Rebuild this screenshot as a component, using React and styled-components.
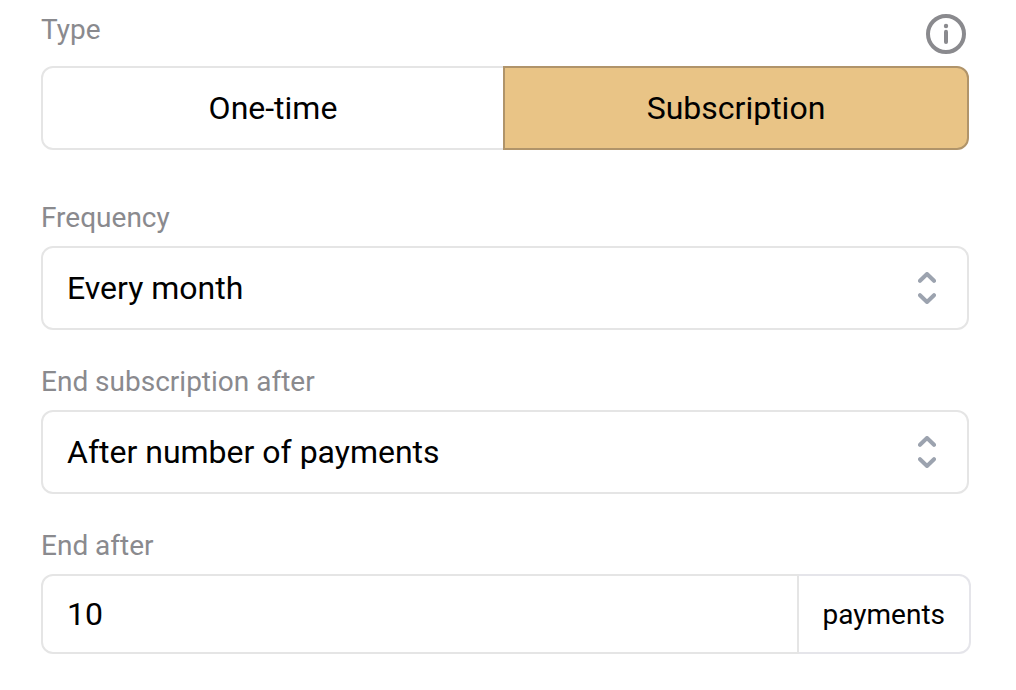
import React, { useState } from "react";
import styled, { createGlobalStyle, ThemeProvider } from "styled-components";

const theme = {
  text: "#000",
  label: "#8a8a8e",
  border: "#e5e5e5",
  addonBorder: "#e5e5ea",
  chevron: "#9ca3af",
  accent: "#e9c486",
  accentBorder: "#b0946a"
};

const SelectField = ({ id, label, options }) => (
  <Field>
    <Label htmlFor={id}>{label}</Label>
    <SelectWrapper>
      <Select id={id}>
        {options.map(option => (
          <option key={option}>{option}</option>
        ))}
      </Select>
      <Chevrons viewBox="0 0 18 32" aria-hidden="true">
        <path d="M2 8.8L9 2L16 8.8M2 23.2L9 30L16 23.2" />
      </Chevrons>
    </SelectWrapper>
  </Field>
);

const App = () => {
  const [type, setType] = useState("Subscription");
  const [count, setCount] = useState("10");

  return (
    <ThemeProvider theme={theme}>
      <GlobalStyle />
      <Form onSubmit={e => e.preventDefault()}>
        <TypeField>
          <TypeHeader>
            <Label as="span" id="type-label">
              Type
            </Label>
            <InfoButton type="button" aria-label="About payment types">
              <svg width="40" height="40" viewBox="0 0 40 40" fill="none">
                <circle cx="20" cy="20" r="18" />
                <path d="M20 17.8V28" />
                <circle cx="20" cy="12" r="2.2" className="dot" />
              </svg>
            </InfoButton>
          </TypeHeader>
          <Segments role="group" aria-labelledby="type-label">
            {["One-time", "Subscription"].map(name => (
              <Segment
                key={name}
                type="button"
                aria-pressed={type === name}
                $active={type === name}
                onClick={() => setType(name)}
              >
                {name}
              </Segment>
            ))}
          </Segments>
        </TypeField>
        <SelectField
          id="frequency"
          label="Frequency"
          options={["Every month", "Every week", "Every year"]}
        />
        <SelectField
          id="end-subscription"
          label="End subscription after"
          options={["After number of payments", "Never", "On date"]}
        />
        <Field>
          <Label htmlFor="end-after">End after</Label>
          <InputGroup>
            <Input
              id="end-after"
              inputMode="numeric"
              value={count}
              onChange={e => setCount(e.target.value)}
            />
            <Addon>payments</Addon>
          </InputGroup>
        </Field>
      </Form>
    </ThemeProvider>
  );
};

const GlobalStyle = createGlobalStyle`
  * {
    box-sizing: border-box;
  }
  body {
    margin: 0;
    background: #fff;
    color: ${props => props.theme.text};
    font-family: Roboto, sans-serif;
    -webkit-font-smoothing: antialiased;
  }
  button,
  input,
  select {
    margin: 0;
    font-family: inherit;
    color: inherit;
  }
`;

const Form = styled.form`
  display: flex;
  flex-direction: column;
  gap: 36px;
  padding: 14px 47px 36px 41px;
`;

const Field = styled.div`
  display: flex;
  flex-direction: column;
  gap: 12px;
`;

const TypeField = styled(Field)`
  margin-bottom: 16px;
`;

const TypeHeader = styled.div`
  display: flex;
  align-items: flex-start;
  justify-content: space-between;
  padding-right: 3px;
`;

const Label = styled.label`
  align-self: flex-start;
  font-size: 28px;
  line-height: 32px;
  color: ${props => props.theme.label};
`;

const InfoButton = styled.button`
  display: block;
  padding: 0;
  border: 0;
  background: none;
  cursor: pointer;
  svg {
    display: block;
    stroke: ${props => props.theme.label};
    stroke-width: 4;
    stroke-linecap: round;
  }
  .dot {
    stroke: none;
    fill: ${props => props.theme.label};
  }
`;

const Segments = styled.div`
  display: grid;
  grid-template-columns: 1fr 1fr;
`;

const Segment = styled.button`
  position: relative;
  z-index: ${props => (props.$active ? 1 : 0)};
  height: 84px;
  padding: 0 24px;
  border: 2px solid
    ${props => (props.$active ? props.theme.accentBorder : props.theme.border)};
  background: ${props => (props.$active ? props.theme.accent : "#fff")};
  font-size: 32px;
  cursor: pointer;
  &:first-child {
    border-radius: 12px 0 0 12px;
  }
  &:last-child {
    margin-left: -2px;
    border-radius: 0 12px 12px 0;
  }
`;

const SelectWrapper = styled.div`
  position: relative;
`;

const Select = styled.select`
  display: block;
  appearance: none;
  width: 100%;
  height: 84px;
  padding: 0 80px 0 24px;
  border: 2px solid ${props => props.theme.border};
  border-radius: 12px;
  background: #fff;
  font-size: 32px;
`;

const Chevrons = styled.svg`
  position: absolute;
  top: 26px;
  right: 33px;
  width: 18px;
  height: 32px;
  pointer-events: none;
  path {
    fill: none;
    stroke: ${props => props.theme.chevron};
    stroke-width: 4;
    stroke-linecap: round;
    stroke-linejoin: round;
  }
`;

/* the addon's border hangs over the column edge */
const InputGroup = styled.div`
  display: flex;
  height: 80px;
  margin-right: -2px;
`;

const Input = styled.input`
  flex: 1;
  min-width: 0;
  padding: 0 24px;
  border: 2px solid ${props => props.theme.border};
  border-radius: 12px 0 0 12px;
  font-size: 32px;
`;

const Addon = styled.span`
  display: flex;
  align-items: center;
  padding: 0 24px;
  border: 2px solid ${props => props.theme.addonBorder};
  border-left: 0;
  border-radius: 0 12px 12px 0;
  font-size: 28px;
`;

export default App;
